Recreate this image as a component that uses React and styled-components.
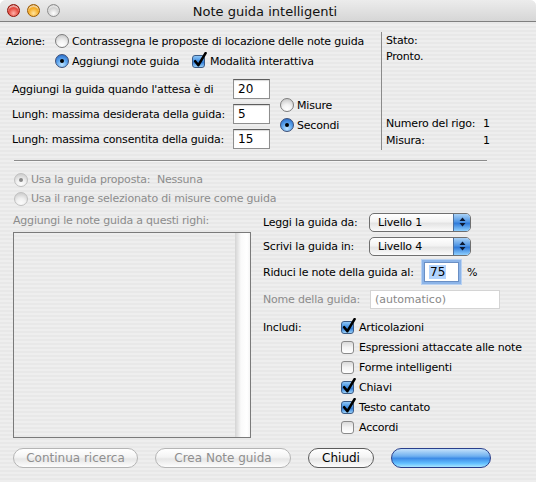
import React from 'react'
import styled, { createGlobalStyle, css } from 'styled-components'

const Global = createGlobalStyle`
  html, body { margin: 0; padding: 0; background: #fff; }
  body { font-family: "Lucida Grande", "DejaVu Sans", sans-serif; font-size: 11px; color: #000; }
  * { box-sizing: border-box; }
`

const Window = styled.div`
  width: 536px;
  height: 482px;
  display: flex;
  flex-direction: column;
  border-radius: 6px 6px 0 0;
  overflow: hidden;
  background: repeating-linear-gradient(to bottom, #eeeeee 0, #eeeeee 2px, #e8e8e8 2px, #e8e8e8 4px);
`

const TitleBar = styled.div`
  height: 22px;
  flex: none;
  position: relative;
  display: flex;
  align-items: center;
  justify-content: center;
  background: linear-gradient(#ececec, #d6d6d6);
  border-bottom: 1px solid #7f7f7f;
`

const Lights = styled.div`
  position: absolute;
  left: 7px;
  top: 4px;
  display: flex;
  gap: 7px;
`

const lightColors = {
  red: ['#ffb1a8', '#e0372b', '#8d1309'],
  amber: ['#ffe4a0', '#f3a20e', '#9a5a03'],
  gray: ['#ffffff', '#cdcdcd', '#8d8d8d'],
}

const Light = styled.span`
  width: 13px;
  height: 13px;
  border-radius: 50%;
  border: 1px solid ${p => lightColors[p.$c][2]};
  background: radial-gradient(circle at 50% 75%, ${p => lightColors[p.$c][0]} 0, ${p => lightColors[p.$c][1]} 60%, ${p => lightColors[p.$c][2]} 100%);
  box-shadow: inset 0 2px 1px rgba(255,255,255,0.6);
`

const Title = styled.div`
  font-size: 13px;
  color: #111;
  padding-top: 1px;
  margin-left: -6px;
`

const Body = styled.div`
  flex: 1;
  padding: 9px 6px 0 6px;
  display: flex;
  flex-direction: column;
  letter-spacing: -0.2px;
`

const TopArea = styled.div`
  display: flex;
  height: 119px;
`

const ActionBlock = styled.div`
  width: 375px;
  display: flex;
  flex-direction: column;
`

const Row = styled.div`
  display: flex;
  align-items: center;
  height: ${p => p.$h || 20}px;
  margin-top: ${p => p.$mt || 0}px;
  padding-left: ${p => p.$pl || 0}px;
  flex: none;
`

const Text = styled.span`
  white-space: nowrap;
  color: ${p => (p.$dim ? '#8c8c8c' : '#000')};
  width: ${p => (p.$w ? `${p.$w}px` : 'auto')};
  flex: none;
  margin-left: ${p => p.$ml || 0}px;
`

const Radio = styled.span`
  position: relative;
  width: 14px;
  height: 14px;
  flex: none;
  border-radius: 50%;
  margin-right: 3px;
  border: 1px solid ${p => (p.$off ? '#b8b8b8' : p.$on ? '#3b4f78' : '#7d7d7d')};
  background: ${p =>
    p.$on && !p.$off
      ? 'radial-gradient(circle at 50% 80%, #bfe4ff 0, #5ea6ee 45%, #1d5fc0 100%)'
      : 'radial-gradient(circle at 50% 85%, #ffffff 0, #f2f2f2 40%, #bdbdbd 100%)'};
  opacity: ${p => (p.$off ? 0.85 : 1)};
  &::after {
    content: '';
    display: ${p => (p.$on ? 'block' : 'none')};
    position: absolute;
    left: 4px;
    top: 4px;
    width: 4px;
    height: 4px;
    border-radius: 50%;
    background: ${p => (p.$off ? '#777' : '#000')};
  }
`

const CheckBox = styled.span`
  position: relative;
  width: 13px;
  height: 13px;
  flex: none;
  border-radius: 3px;
  margin-right: 5px;
  border: 1px solid ${p => (p.$on ? '#3b5a85' : '#8a8a8a')};
  background: ${p =>
    p.$on
      ? 'linear-gradient(#8fc6f5 0, #3d8be0 50%, #2a76d4 55%, #9bd3fb 100%)'
      : 'linear-gradient(#d9d9d9 0, #f4f4f4 50%, #ffffff 100%)'};
  svg {
    position: absolute;
    left: 0px;
    top: -4px;
  }
`

function Check({ on }) {
  return (
    <CheckBox $on={on}>
      {on && (
        <svg width="14" height="16" viewBox="0 0 14 16">
          <path d="M2.2 9.2 L5.4 13.2 L12.6 1.2" fill="none" stroke="#000" strokeWidth="2.6" strokeLinejoin="round" strokeLinecap="round" />
        </svg>
      )}
    </CheckBox>
  )
}

const Field = styled.div`
  width: ${p => p.$w}px;
  height: ${p => p.$h || 20}px;
  flex: none;
  display: flex;
  align-items: center;
  padding-left: 4px;
  background: #fff;
  border: 1px solid #8e8e8e;
  border-top-color: #5e5e5e;
  box-shadow: inset 0 1px 1px rgba(0,0,0,0.15);
  font-size: 12px;
  letter-spacing: 0;
  color: ${p => (p.$dim ? '#888' : '#000')};
  ${p =>
    p.$focus &&
    css`
      border: 1px solid #6a8fc4;
      box-shadow: 0 0 0 2px #8cb4e8, 0 0 0 3px #b9d2f2;
    `}
  ${p =>
    p.$dim &&
    css`
      border-color: #d4d4d4;
      box-shadow: none;
      font-size: 11px;
    `}
`

const Selected = styled.span`
  background: #b3d4fd;
  padding: 0 1px;
`

const FieldsBlock = styled.div`
  display: flex;
  align-items: center;
  margin-top: 8px;
  padding-left: 6px;
`

const FieldRows = styled.div`
  display: flex;
  flex-direction: column;
  gap: 5px;
`

const UnitGroup = styled.div`
  display: flex;
  flex-direction: column;
  margin-left: 10px;
  margin-top: 2px;
`

const StatusPanel = styled.div`
  flex: 1;
  margin-top: 1px;
  border-left: 1px solid #8a8a8a;
  padding: 1px 0 1px 4px;
  display: flex;
  flex-direction: column;
  line-height: 16px;
`

const StatusBottom = styled.div`
  margin-top: auto;
  display: flex;
  flex-direction: column;
  gap: 1px;
`

const StatusLine = styled.div`
  display: flex;
`

const Separator = styled.div`
  margin: 10px 0 0 8px;
  width: 473px;
  height: 1px;
  background: #8c8c8c;
  box-shadow: 0 1px 0 #f6f6f6;
  flex: none;
`

const ChoiceBlock = styled.div`
  display: flex;
  flex-direction: column;
  margin-top: 9px;
  padding-left: 8px;
`

const Lower = styled.div`
  display: flex;
  margin-top: 3px;
`

const ListColumn = styled.div`
  width: 238px;
  margin-left: 7px;
  display: flex;
  flex-direction: column;
`

const ListBox = styled.div`
  margin-top: 3px;
  height: 206px;
  border: 1px solid #7a7a7a;
  display: flex;
  justify-content: flex-end;
  background: repeating-linear-gradient(to bottom, #eeeeee 0, #eeeeee 2px, #e8e8e8 2px, #e8e8e8 4px);
`

const ScrollTrack = styled.div`
  width: 15px;
  height: 100%;
  background: linear-gradient(to right, #d4d4d4 0, #e6e6e6 3px, #fafafa 6px, #ffffff 12px, #f4f4f4 15px);
`

const SidePanel = styled.div`
  margin-left: 12px;
  display: flex;
  flex-direction: column;
  flex: 1;
`

const Popup = styled.div`
  width: 102px;
  height: 19px;
  display: flex;
  border-radius: 5px;
  border: 1px solid #6f6f6f;
  overflow: hidden;
  background: linear-gradient(#ffffff 0, #f3f3f3 45%, #e4e4e4 55%, #fbfbfb 100%);
  font-size: 11px;
`

const PopupLabel = styled.div`
  flex: 1;
  display: flex;
  align-items: center;
  padding-left: 8px;
`

const PopupArrows = styled.div`
  width: 17px;
  display: flex;
  align-items: center;
  justify-content: center;
  border-left: 1px solid #4b6f9e;
  background: linear-gradient(#a9d2f7 0, #4f95e4 45%, #2f7ad9 55%, #8fd0ff 100%);
`

function Select({ value }) {
  return (
    <Popup>
      <PopupLabel>{value}</PopupLabel>
      <PopupArrows>
        <svg width="7" height="10" viewBox="0 0 7 10">
          <path d="M3.5 0.5 L6.5 4 L0.5 4 Z M3.5 9.5 L6.5 6 L0.5 6 Z" fill="#0c1a33" />
        </svg>
      </PopupArrows>
    </Popup>
  )
}

const ButtonRow = styled.div`
  display: flex;
  margin-top: 10px;
  padding-left: 7px;
  gap: 17px;
  letter-spacing: 0;
`

const PushButton = styled.div`
  width: ${p => p.$w}px;
  height: 20px;
  border-radius: 10px;
  display: flex;
  align-items: center;
  justify-content: center;
  font-size: 12px;
  color: ${p => (p.$off ? '#8f8f8f' : '#000')};
  border: 1px solid ${p => (p.$off ? '#b5b5b5' : '#5c5c5c')};
  background: linear-gradient(#ffffff 0, #f4f4f4 45%, #e6e6e6 55%, #fdfdfd 100%);
  ${p =>
    p.$primary &&
    css`
      border-color: #2a3f8c;
      background: linear-gradient(#c4e2fb 0, #6fb0f0 40%, #3d8be6 52%, #63c0ff 80%, #a8e6ff 100%);
    `}
`

const includes = [
  ['Articolazioni', true],
  ['Espressioni attaccate alle note', false],
  ['Forme intelligenti', false],
  ['Chiavi', true],
  ['Testo cantato', true],
  ['Accordi', false],
]

export default function App() {
  return (
    <Window>
      <Global />
      <TitleBar>
        <Lights>
          <Light $c="red" />
          <Light $c="amber" />
          <Light $c="gray" />
        </Lights>
        <Title>Note guida intelligenti</Title>
      </TitleBar>
      <Body>
        <TopArea>
          <ActionBlock>
            <Row>
              <Text $w={49}>Azione:</Text>
              <Radio />
              <Text>Contrassegna le proposte di locazione delle note guida</Text>
            </Row>
            <Row $pl={49}>
              <Radio $on />
              <Text $w={120}>Aggiungi note guida</Text>
              <Check on />
              <Text>Modalità interattiva</Text>
            </Row>
            <FieldsBlock>
              <FieldRows>
                <Row>
                  <Text $w={221}>Aggiungi la guida quando l'attesa è di</Text>
                  <Field $w={37}>20</Field>
                </Row>
                <Row>
                  <Text $w={221}>Lungh: massima desiderata della guida:</Text>
                  <Field $w={37}>5</Field>
                </Row>
                <Row>
                  <Text $w={221}>Lungh: massima consentita della guida:</Text>
                  <Field $w={37}>15</Field>
                </Row>
              </FieldRows>
              <UnitGroup>
                <Row>
                  <Radio />
                  <Text>Misure</Text>
                </Row>
                <Row>
                  <Radio $on />
                  <Text>Secondi</Text>
                </Row>
              </UnitGroup>
            </FieldsBlock>
          </ActionBlock>
          <StatusPanel>
            <div>Stato:</div>
            <div>Pronto.</div>
            <StatusBottom>
              <StatusLine>
                <Text $w={97}>Numero del rigo:</Text>
                <Text>1</Text>
              </StatusLine>
              <StatusLine>
                <Text $w={97}>Misura:</Text>
                <Text>1</Text>
              </StatusLine>
            </StatusBottom>
          </StatusPanel>
        </TopArea>

        <Separator />

        <ChoiceBlock>
          <Row $h={19}>
            <Radio $on $off />
            <Text $dim>Usa la guida proposta:&nbsp; Nessuna</Text>
          </Row>
          <Row $h={19}>
            <Radio $off />
            <Text $dim>Usa il range selezionato di misure come guida</Text>
          </Row>
        </ChoiceBlock>

        <Lower>
          <ListColumn>
            <Row $h={18}>
              <Text $dim>Aggiungi le note guida a questi righi:</Text>
            </Row>
            <ListBox>
              <ScrollTrack />
            </ListBox>
          </ListColumn>
          <SidePanel>
            <Row $mt={1}>
              <Text $w={106}>Leggi la guida da:</Text>
              <Select value="Livello 1" />
            </Row>
            <Row $mt={4}>
              <Text $w={106}>Scrivi la guida in:</Text>
              <Select value="Livello 4" />
            </Row>
            <Row $mt={6}>
              <Text $w={161}>Riduci le note della guida al:</Text>
              <Field $w={35} $focus>
                <Selected>75</Selected>
              </Field>
              <Text $ml={8}>%</Text>
            </Row>
            <Row $mt={7}>
              <Text $w={107} $dim>Nome della guida:</Text>
              <Field $w={130} $h={19} $dim>(automatico)</Field>
            </Row>
            <Row $mt={8}>
              <Text $w={78}>Includi:</Text>
              <Check on={includes[0][1]} />
              <Text>{includes[0][0]}</Text>
            </Row>
            {includes.slice(1).map(([label, on]) => (
              <Row key={label} $pl={78}>
                <Check on={on} />
                <Text>{label}</Text>
              </Row>
            ))}
          </SidePanel>
        </Lower>

        <ButtonRow>
          <PushButton $w={125} $off>Continua ricerca</PushButton>
          <PushButton $w={136} $off>Crea Note guida</PushButton>
          <PushButton $w={66}>Chiudi</PushButton>
          <PushButton $w={100} $primary />
        </ButtonRow>
      </Body>
    </Window>
  )
}
